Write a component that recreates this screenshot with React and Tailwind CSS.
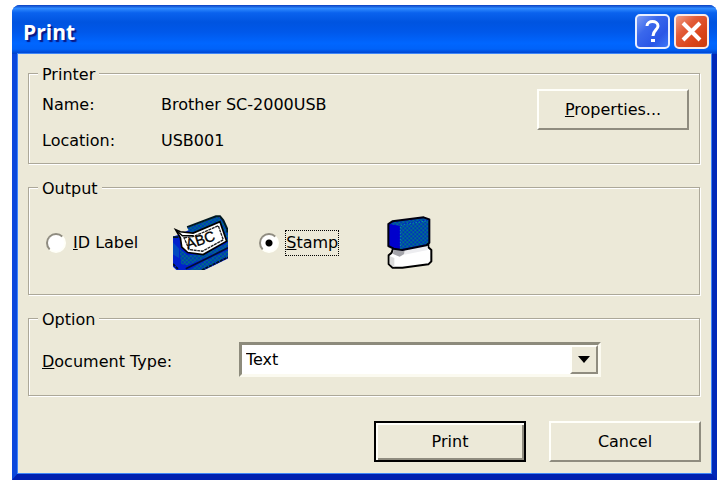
import { useState } from 'react';
import clsx from 'clsx';

const raised = 'bg-[#ece9d8] border-2 border-t-[#fffffa] border-l-[#fffffa] border-r-[#8f8c7f] border-b-[#8f8c7f]';

function Group({ title, className, children }) {
  return (
    <fieldset className="min-w-0 border border-[#aca899] pl-[13px] shadow-[1px_1px_0_#ffffff,inset_1px_1px_0_#ffffff]">
      <legend className="-ml-1 bg-[#ece9d8] px-1 pt-[3px] leading-5">{title}</legend>
      <div className={className}>{children}</div>
    </fieldset>
  );
}

function PushButton({ className, children }) {
  return (
    <button type="button" className={clsx('h-[41px] w-[152px] leading-5', className)}>
      {children}
    </button>
  );
}

function Radio({ id, checked, onChange, focused, children }) {
  return (
    <div className="flex items-center gap-[6px]">
      <input
        id={id}
        type="radio"
        name="output"
        checked={checked}
        onChange={onChange}
        className="size-5 appearance-none rounded-full border-2 border-t-[#8f8c80] border-l-[#8f8c80] border-r-[#fffff8] border-b-[#fffff8] bg-white checked:bg-[radial-gradient(circle,#000000_3px,#ffffff_4px)]"
      />
      <label htmlFor={id} className={clsx('border leading-6', focused ? 'border-dotted border-black' : 'border-transparent')}>
        {children}
      </label>
    </div>
  );
}

function LabelIcon() {
  return (
    <svg viewBox="40 30 164 164" className="size-[55px]" aria-hidden="true">
      <defs>
        <pattern id="dither" width="12" height="12" patternUnits="userSpaceOnUse">
          <rect width="12" height="12" fill="#0034c0" />
          <rect width="6" height="6" fill="#007080" />
          <rect x="6" y="6" width="6" height="6" fill="#007080" />
        </pattern>
      </defs>
      {/* machine body */}
      <path d="M40 94 L60 88 L168 36 L182 38 L204 76 V160 L134 194 H50 L40 184 Z" fill="#0020cc" />
      <path d="M82 68 L172 34 L186 42 L204 76 V118 L182 60 L92 84 Z" fill="url(#dither)" />
      <path d="M60 132 L84 150 L136 146 L204 112 V126 L136 158 L84 180 L64 176 Z" fill="url(#dither)" />
      <path d="M40 112 L58 130 V158 L40 148 Z" fill="#0048c0" />
      <path d="M88 194 L136 166 L204 134 V154 L130 194 Z" fill="url(#dither)" />
      <path d="M82 66 L168 34 H180 L190 46 L202 72 V82" fill="none" stroke="#001820" strokeWidth="6" />
      <path d="M78 190 L136 162 L204 128" fill="none" stroke="#001030" strokeWidth="5" />
      <path d="M126 194 L204 156 M40 176 L56 192" fill="none" stroke="#001020" strokeWidth="5" strokeDasharray="9 3" />
      <path d="M40 96 H56" stroke="#001820" strokeWidth="5" />
      {/* printed label */}
      <path d="M48 74 L62 80 L100 84 L180 50 L200 108 L130 148 L84 142 L66 126 L62 98 Z" fill="#ffffff" stroke="#000000" strokeWidth="5" />
      <path d="M52 78 L68 92 L102 92" fill="none" stroke="#000000" strokeWidth="4" />
      <path d="M73 98 L102 94 L175 62 L190 104 L128 138 L88 133 Z" fill="none" stroke="#202020" strokeWidth="4" strokeDasharray="9 2" />
      <text x="84" y="132" transform="rotate(-18 84 132)" fontSize="43" fontFamily="Liberation Sans, sans-serif" fill="#000000" stroke="#000000" strokeWidth="1">ABC</text>
    </svg>
  );
}

function StampIcon() {
  return (
    <svg viewBox="39 32 136 159" className="h-[53px] w-[46px]" aria-hidden="true">
      <defs>
        <pattern id="stampDither" width="12" height="12" patternUnits="userSpaceOnUse">
          <rect width="12" height="12" fill="#0030c0" />
          <rect width="6" height="6" fill="#007484" />
          <rect x="6" y="6" width="6" height="6" fill="#007484" />
        </pattern>
      </defs>
      {/* white base */}
      <path d="M56 130 L52 142 L43 150 V176 L54 187 H84 L162 177 L171 168 V134 L162 126 V116 Z" fill="#ffffff" stroke="#000000" strokeWidth="6" strokeLinejoin="round" />
      <path d="M46 152 L60 158 V186 L46 176 Z" fill="#dcdcdc" />
      <path d="M58 130 L92 128 L90 146 L76 154 L56 146 Z" fill="#a4a4aa" />
      <path d="M92 132 L160 122 V134 L90 148 Z" fill="#ededf0" />
      {/* blue handle */}
      <path d="M42 56 L54 48 L148 36 L165 42 V112 L156 120 L84 134 L58 130 L42 122 Z" fill="#0000cc" />
      <path d="M46 56 L58 50 L148 38 L162 44 L84 56 L78 62 Z" fill="url(#stampDither)" />
      <path d="M78 60 L164 44 V116 L78 132 Z" fill="url(#stampDither)" />
      <path d="M78 132 V62 L84 58 L160 46" fill="none" stroke="#0890a8" strokeWidth="3" strokeDasharray="5 4" />
      <path d="M42 56 L54 48 L148 36 L165 42 V112 L156 120 L84 134 L58 130 L42 122 Z" fill="none" stroke="#000010" strokeWidth="6" strokeLinejoin="round" />
    </svg>
  );
}

function TitleBar() {
  return (
    <header className="flex h-[49px] items-center justify-between rounded-t-lg bg-[linear-gradient(to_bottom,#0a3fc0_0%,#2f8bff_7%,#0a62ee_16%,#0054e0_35%,#0058ea_55%,#0066ff_78%,#0062f8_90%,#0040c8_100%)] pt-1 pr-2 pl-[11px]">
      <h1 className="font-['Open_Sans',sans-serif] text-[21px] leading-8 font-bold text-white [text-shadow:2px_2px_1px_#0a1883]">Print</h1>
      <div className="flex gap-1">
        <button type="button" aria-label="Help" className="size-[35px] rounded-[5px] border-2 border-[#e8efff] bg-[linear-gradient(135deg,#7d9df4_0%,#3a68ec_35%,#2a56e6_70%,#3c78f8_100%)]">
          <svg viewBox="0 0 31 31" className="size-full" fill="none" stroke="#ffffff" strokeWidth="3" aria-hidden="true">
            <path d="M10 10 C10 4 21 4 21 10 C21 14 16 14 16 20" />
            <path d="M16 23 V26" strokeWidth="4" />
          </svg>
        </button>
        <button type="button" aria-label="Close" className="size-[35px] rounded-[5px] border-2 border-[#fbe9e4] bg-[linear-gradient(135deg,#f0a088_0%,#e25c38_35%,#da4318_70%,#c83c10_100%)]">
          <svg viewBox="0 0 31 31" className="size-full" fill="none" stroke="#ffffff" strokeWidth="4" aria-hidden="true">
            <path d="M7 7 L24 24 M24 7 L7 24" />
          </svg>
        </button>
      </div>
    </header>
  );
}

function App() {
  const [output, setOutput] = useState('stamp');
  const [docType, setDocType] = useState('Text');

  return (
    <div className="min-h-screen bg-white pt-[5px] pr-[9px] pb-0.5 pl-3 font-['DejaVu_Sans',sans-serif] text-[16px] text-black">
      <main className="rounded-t-lg bg-[#0a4be0]">
        <TitleBar />
        <form className="border-x-[6px] border-b-[7px] border-l-[#0b48dc] border-r-[#0028b8] border-b-[#0020b0]">
          <div className="bg-[#ece9d8] px-[10px] pt-2 pb-[11px] shadow-[0_0_0_1px_#3f86f8]">
            <div className="flex flex-col gap-3 pr-px">
              <Group title="Printer" className="flex items-start justify-between pr-[10px] pb-3">
                <dl className="grid grid-cols-[119px_auto] gap-y-4 pt-[10px] leading-5">
                  <dt>Name:</dt>
                  <dd>Brother SC-2000USB</dd>
                  <dt>Location:</dt>
                  <dd>USB001</dd>
                </dl>
                <PushButton className={clsx(raised, 'mt-1')}><u>P</u>roperties...</PushButton>
              </Group>

              <Group title="Output" className="flex items-center pt-4 pb-6 pl-1">
                <Radio id="idLabel" checked={output === 'label'} onChange={() => setOutput('label')}>
                  <u>I</u>D Label
                </Radio>
                <span className="ml-[34px]"><LabelIcon /></span>
                <div className="ml-[31px] w-[128px]">
                  <Radio id="stamp" focused checked={output === 'stamp'} onChange={() => setOutput('stamp')}>
                    <u>S</u>tamp
                  </Radio>
                </div>
                <StampIcon />
              </Group>

              <Group title="Option" className="flex items-center pt-3 pr-[98px] pb-[18px]">
                <label htmlFor="docType" className="w-[197px] pt-1 leading-5"><u>D</u>ocument Type:</label>
                <div className="relative flex-1">
                  <select
                    id="docType"
                    value={docType}
                    onChange={(e) => setDocType(e.target.value)}
                    className="block h-[35px] w-full appearance-none rounded-none border-[3px] border-t-[#8d8b7c] border-l-[#8d8b7c] border-r-[#fbfaf0] border-b-[#fbfaf0] bg-white pl-1 leading-5"
                  >
                    <option>Text</option>
                  </select>
                  <span className={clsx(raised, 'pointer-events-none absolute top-[3px] right-[3px] bottom-[3px] flex w-7 items-center justify-center')}>
                    <svg viewBox="0 0 12 7" className="h-[7px] w-3" aria-hidden="true"><path d="M0 0 H12 L6 7 Z" /></svg>
                  </span>
                </div>
              </Group>
            </div>

            <div className="mt-[25px] flex justify-end gap-[23px]">
              <PushButton className="border-2 border-black bg-[#ece9d8] shadow-[inset_2px_2px_0_#fffffa,inset_-2px_-2px_0_#8f8c7f]">Print</PushButton>
              <PushButton className={raised}>Cancel</PushButton>
            </div>
          </div>
        </form>
      </main>
    </div>
  );
}

export default App;
